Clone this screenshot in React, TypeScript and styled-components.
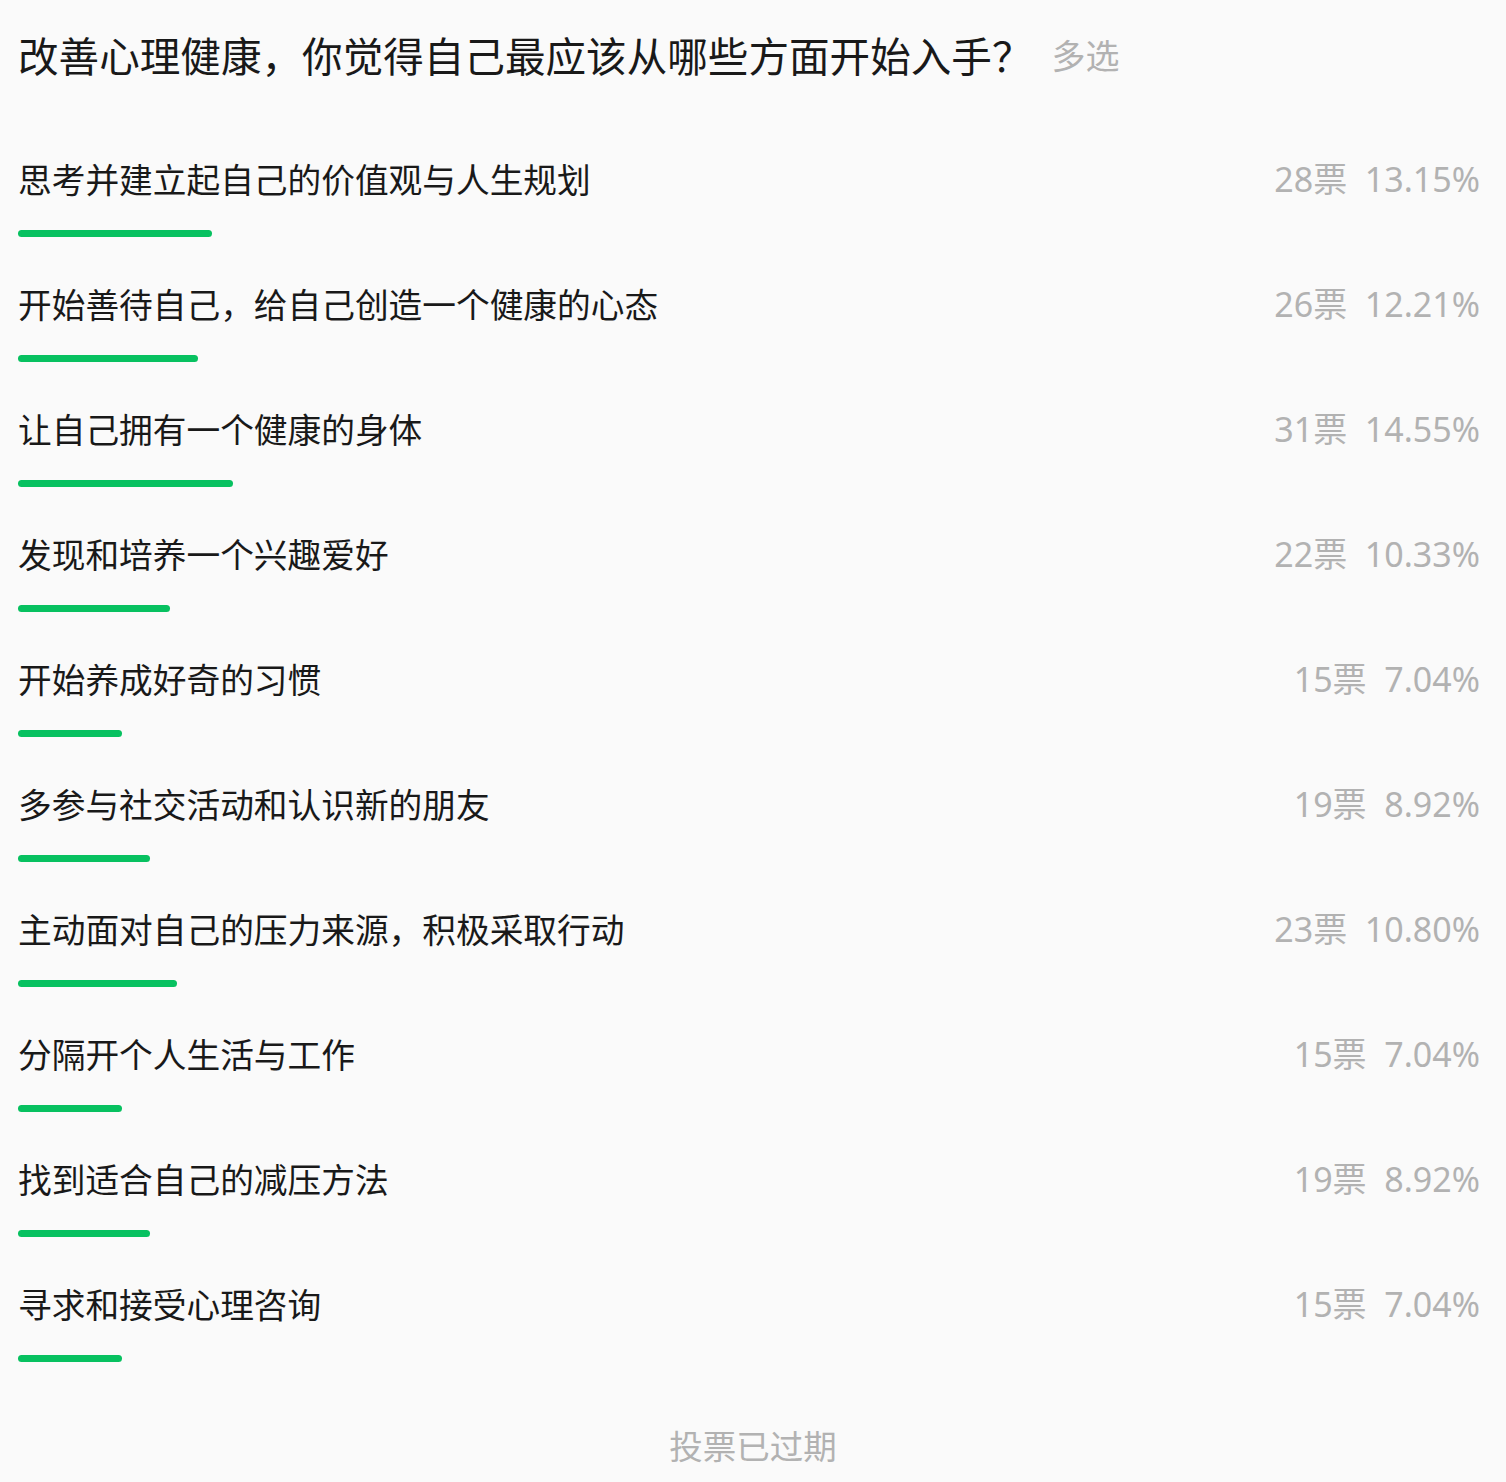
import React from "react";
import styled, { createGlobalStyle } from "styled-components";

const GlobalStyle = createGlobalStyle`
  html, body {
    margin: 0;
    padding: 0;
    background: #fafafa;
  }
  body {
    font-family: "Noto Sans", "Noto Sans CJK SC", sans-serif;
  }
`;

const Page = styled.div`
  background: #fafafa;
  min-height: 1482px;
  box-sizing: border-box;
  padding: 30px 26px 10px 18px;
  display: flex;
  flex-direction: column;
`;

const Header = styled.div`
  display: flex;
  align-items: center;
  height: 50px;
  margin-bottom: 74px;
`;

const Title = styled.h1`
  margin: 0;
  font-family: "Noto Sans CJK SC", sans-serif;
  font-weight: 400;
  font-size: 40.6px;
  line-height: 50px;
  color: #191919;
  white-space: nowrap;
`;

const Tag = styled.span`
  margin-left: 19px;
  font-family: "Noto Sans CJK SC", sans-serif;
  font-size: 34px;
  line-height: 50px;
  color: #b2b2b2;
  white-space: nowrap;
`;

const List = styled.div`
  display: flex;
  flex-direction: column;
`;

const Option = styled.div`
  display: flex;
  flex-direction: column;
  height: 125px;
`;

const Row = styled.div`
  display: flex;
  justify-content: space-between;
  align-items: center;
  height: 50px;
`;

const Label = styled.span`
  font-family: "Noto Sans CJK SC", sans-serif;
  font-size: 33.7px;
  line-height: 50px;
  color: #191919;
`;

const Stats = styled.span`
  font-family: "Noto Sans", "Noto Sans CJK SC", sans-serif;
  font-size: 34px;
  line-height: 50px;
  color: #b2b2b2;
  white-space: pre;
`;

const Bar = styled.div`
  margin-top: 26px;
  height: 7px;
  border-radius: 4px;
  background: #07c160;
`;

const Footer = styled.div`
  margin-top: 16px;
  text-align: center;
  font-family: "Noto Sans CJK SC", sans-serif;
  font-size: 33.5px;
  line-height: 50px;
  color: #b2b2b2;
  padding-left: 8px;
`;

const options: { label: string; votes: number; pct: string }[] = [
  { label: "思考并建立起自己的价值观与人生规划", votes: 28, pct: "13.15" },
  { label: "开始善待自己，给自己创造一个健康的心态", votes: 26, pct: "12.21" },
  { label: "让自己拥有一个健康的身体", votes: 31, pct: "14.55" },
  { label: "发现和培养一个兴趣爱好", votes: 22, pct: "10.33" },
  { label: "开始养成好奇的习惯", votes: 15, pct: "7.04" },
  { label: "多参与社交活动和认识新的朋友", votes: 19, pct: "8.92" },
  { label: "主动面对自己的压力来源，积极采取行动", votes: 23, pct: "10.80" },
  { label: "分隔开个人生活与工作", votes: 15, pct: "7.04" },
  { label: "找到适合自己的减压方法", votes: 19, pct: "8.92" },
  { label: "寻求和接受心理咨询", votes: 15, pct: "7.04" },
];

export default function App() {
  return (
    <>
      <GlobalStyle />
      <Page>
        <Header>
          <Title>改善心理健康，你觉得自己最应该从哪些方面开始入手？</Title>
          <Tag>多选</Tag>
        </Header>
        <List>
          {options.map((o, i) => (
            <Option key={i}>
              <Row>
                <Label>{o.label}</Label>
                <Stats>{`${o.votes}票  ${o.pct}%`}</Stats>
              </Row>
              <Bar style={{ width: `${(parseFloat(o.pct) / 100) * 1475}px` }} />
            </Option>
          ))}
        </List>
        <Footer>投票已过期</Footer>
      </Page>
    </>
  );
}
